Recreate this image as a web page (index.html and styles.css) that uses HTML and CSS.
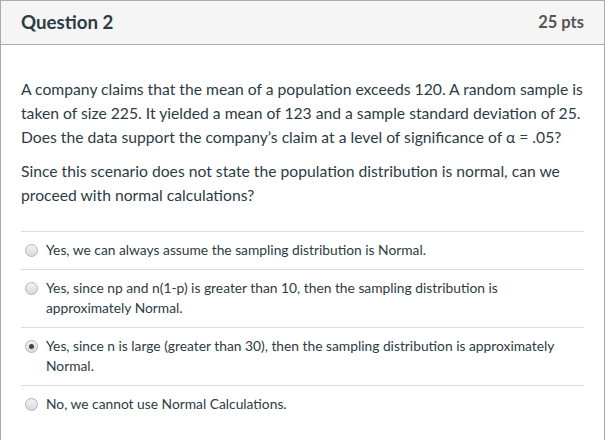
FILE: index.html
```html
<!DOCTYPE html>
<html>
<head>
<meta charset="utf-8">
<link rel="stylesheet" href="styles.css">
</head>
<body>
<div class="question">
  <div class="header">
    <div class="title">Question 2</div>
    <div class="points">25 pts</div>
  </div>
  <div class="content">
    <p>A company claims that the mean of a population exceeds 120. A random sample is taken of size 225. It yielded a mean of 123 and a sample standard deviation of 25. Does the data support the company’s claim at a level of significance of α = .05?</p>
    <p>Since this scenario does not state the population distribution is normal, can we proceed with normal calculations?</p>
    <div class="answers">
      <label class="answer"><span class="radio"></span><span class="label">Yes, we can always assume the sampling distribution is Normal.</span></label>
      <label class="answer"><span class="radio"></span><span class="label">Yes, since np and n(1-p) is greater than 10, then the sampling distribution is approximately Normal.</span></label>
      <label class="answer"><span class="radio checked"></span><span class="label">Yes, since n is large (greater than 30), then the sampling distribution is approximately Normal.</span></label>
      <label class="answer"><span class="radio"></span><span class="label">No, we cannot use Normal Calculations.</span></label>
    </div>
  </div>
</div>
</body>
</html>
```
FILE: styles.css
```css
html, body {
  margin: 0;
  padding: 0;
  background: #fff;
}
body {
  font-family: Lato, "Open Sans", sans-serif;
  color: #2d3b45;
}
.question {
  width: 603px;
  height: 440px;
  border: 1px solid #aaaaaa;
  border-bottom: none;
  box-sizing: content-box;
}
.header {
  display: flex;
  justify-content: space-between;
  align-items: center;
  height: 43px;
  background: #f5f5f5;
  border-bottom: 1px solid #aaaaaa;
  padding: 0 20px;
}
.title {
  font-size: 18.7px;
  font-weight: 700;
  color: #2d3b45;
  padding-bottom: 2px;
}
.points {
  font-size: 16.5px;
  font-weight: 700;
  color: #555555;
  padding-bottom: 2px;
}
.content {
  padding: 32px 20px 0 20px;
}
p {
  margin: 0 0 10px 0;
  font-size: 15.7px;
  line-height: 24px;
}
.answers {
  margin-top: 24px;
}
.answer {
  display: flex;
  align-items: flex-start;
  border-top: 1px solid #dddddd;
  padding: 8px 0 9px 0;
  font-size: 13.8px;
  line-height: 20px;
}
.radio {
  flex: none;
  width: 11px;
  height: 11px;
  margin: 4px 8px 0 4px;
  border-radius: 50%;
  border: 1px solid #b5b5b5;
  background: linear-gradient(#f2f2f2, #dadada);
  position: relative;
}
.radio.checked::after {
  content: "";
  position: absolute;
  left: 3px;
  top: 3px;
  width: 5px;
  height: 5px;
  border-radius: 50%;
  background: #444;
}
```
